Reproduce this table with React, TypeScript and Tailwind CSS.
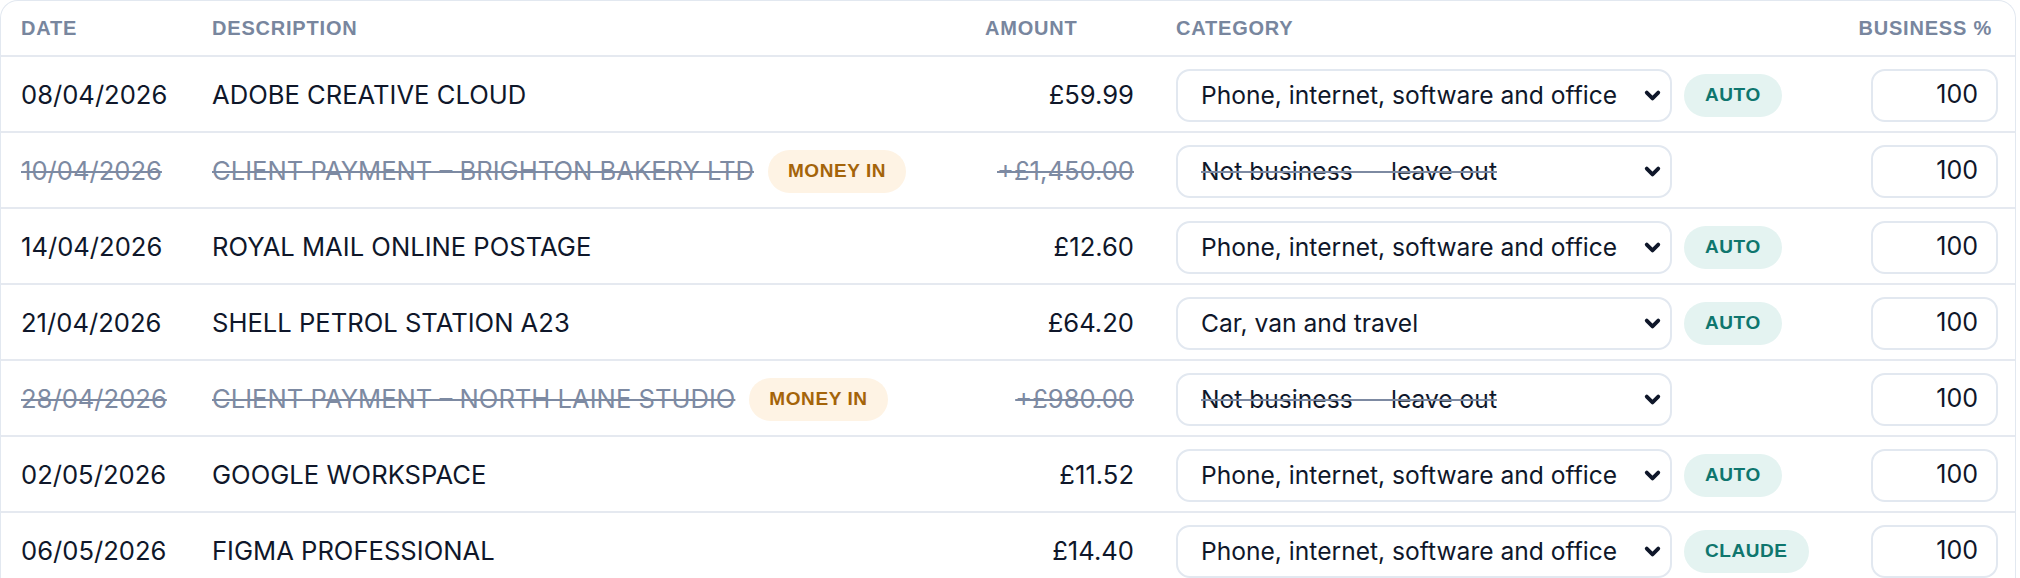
import { ChevronDown } from "lucide-react";

type Row = {
  date: string;
  desc: string;
  amount: string;
  category: string;
  tag?: "AUTO" | "CLAUDE";
  moneyIn?: boolean;
};

const rows: Row[] = [
  { date: "08/04/2026", desc: "ADOBE CREATIVE CLOUD", amount: "£59.99", category: "Phone, internet, software and office", tag: "AUTO" },
  { date: "10/04/2026", desc: "CLIENT PAYMENT – BRIGHTON BAKERY LTD", amount: "+£1,450.00", category: "Not business — leave out", moneyIn: true },
  { date: "14/04/2026", desc: "ROYAL MAIL ONLINE POSTAGE", amount: "£12.60", category: "Phone, internet, software and office", tag: "AUTO" },
  { date: "21/04/2026", desc: "SHELL PETROL STATION A23", amount: "£64.20", category: "Car, van and travel", tag: "AUTO" },
  { date: "28/04/2026", desc: "CLIENT PAYMENT – NORTH LAINE STUDIO", amount: "+£980.00", category: "Not business — leave out", moneyIn: true },
  { date: "02/05/2026", desc: "GOOGLE WORKSPACE", amount: "£11.52", category: "Phone, internet, software and office", tag: "AUTO" },
  { date: "06/05/2026", desc: "FIGMA PROFESSIONAL", amount: "£14.40", category: "Phone, internet, software and office", tag: "CLAUDE" },
];

const head = "font-['Liberation_Sans',sans-serif] font-bold text-[20px] tracking-[0.04em] text-[#78869e] uppercase";
const badge = "font-['Liberation_Sans',sans-serif] font-bold text-[19px] tracking-[0.03em] rounded-full h-[43px] flex items-center";
const struck = "line-through decoration-2 text-[#7d8aa2]";

export default function App() {
  return (
    <div className="w-[2016px] bg-white font-['Inter',sans-serif] text-[#0f172a]">
      <div className="border-[1.5px] border-b-0 border-[#e2e8f0] rounded-t-[18px] overflow-hidden">
        {/* Header */}
        <div className="flex items-center h-[56px] pl-[20px] pr-[17px] border-b-2 border-[#e5e9f0]">
          <div className={`w-[191px] ${head}`}>Date</div>
          <div className={`w-[773px] ${head}`}>Description</div>
          <div className={`w-[149px] ${head}`}>Amount</div>
          <div className={`ml-[42px] flex-1 ${head}`}>Category</div>
          <div className={`w-[140px] text-right pr-[6px] ${head}`}>Business %</div>
        </div>

        {rows.map((r, i) => (
          <div key={i} className="flex items-center h-[76px] pt-[2px] pl-[20px] pr-[17px] border-b-2 border-[#e5e9f0] text-[25.6px]">
            <div className={`w-[191px] ${r.moneyIn ? struck : ""}`}>{r.date}</div>
            <div className="w-[773px] flex items-center gap-[14px]">
              <span className={r.moneyIn ? struck : ""}>{r.desc}</span>
              {r.moneyIn && (
                <span className={`${badge} px-[20px] bg-[#fef3e4] text-[#a4640a]`}>MONEY IN</span>
              )}
            </div>
            <div className={`w-[149px] text-right ${r.moneyIn ? struck : ""}`}>{r.amount}</div>
            <div className="ml-[42px] flex-1 flex items-center gap-[12px]">
              <div className="w-[496px] h-[53px] border-2 border-[#e2e8f0] rounded-[14px] flex items-center justify-between pl-[23px] pr-[6px] text-[24.6px]">
                <span className={r.moneyIn ? "line-through decoration-2 decoration-[#7d8aa2]" : ""}>{r.category}</span>
                <ChevronDown className="w-[23px] h-[23px]" strokeWidth={4} />
              </div>
              {r.tag && (
                <span className={`${badge} px-[21px] bg-[#e4f3f1] text-[#0f766e]`}>{r.tag}</span>
              )}
            </div>
            <div className="w-[127px] h-[53px] border-2 border-[#e2e8f0] rounded-[14px] flex items-center justify-end pr-[18px] text-[25px]">
              100
            </div>
          </div>
        ))}
      </div>
    </div>
  );
}
